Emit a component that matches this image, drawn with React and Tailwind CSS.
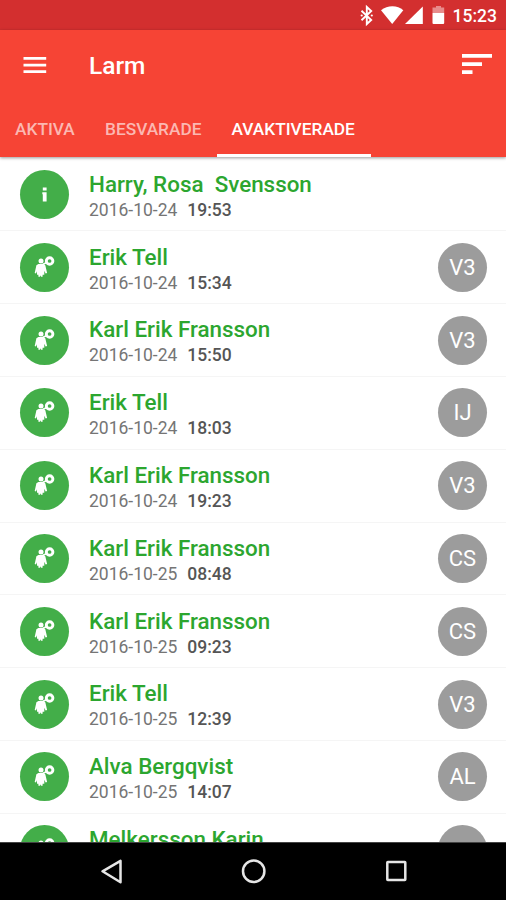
import React from 'react';

const alarms = [
  { name: 'Harry, Rosa  Svensson', date: '2016-10-24', time: '19:53', type: 'info' },
  { name: 'Erik Tell', date: '2016-10-24', time: '15:34', badge: 'V3' },
  { name: 'Karl Erik Fransson', date: '2016-10-24', time: '15:50', badge: 'V3' },
  { name: 'Erik Tell', date: '2016-10-24', time: '18:03', badge: 'IJ' },
  { name: 'Karl Erik Fransson', date: '2016-10-24', time: '19:23', badge: 'V3' },
  { name: 'Karl Erik Fransson', date: '2016-10-25', time: '08:48', badge: 'CS' },
  { name: 'Karl Erik Fransson', date: '2016-10-25', time: '09:23', badge: 'CS' },
  { name: 'Erik Tell', date: '2016-10-25', time: '12:39', badge: 'V3' },
  { name: 'Alva Bergqvist', date: '2016-10-25', time: '14:07', badge: 'AL' },
  { name: 'Melkersson Karin', badge: '' },
];

function StatusBar() {
  return (
    <div className="h-[30px] shrink-0 bg-[#d32f2f] flex items-center justify-end pr-[9px] text-white">
      <svg className="mr-[7px]" width="86" height="30" viewBox="0 0 86 30" fill="none">
        {/* bluetooth */}
        <path d="M1.5 10.7 L11.2 20 L6.8 24 V7 L11.2 11 L1.5 20.3" stroke="#fff" strokeWidth="1.9" />
        <circle cx="1.7" cy="15.5" r="1.1" fill="#fff" />
        <circle cx="11.8" cy="15.5" r="1.1" fill="#fff" />
        {/* wifi */}
        <path d="M21 10.3 C27.5 4.8 37.5 4.8 43.3 10.3 L32.2 24Z" fill="#fff" />
        {/* signal */}
        <path d="M62.8 6.5V24H45Z" fill="#fff" />
        {/* battery */}
        <path d="M76 6h5v1.6h3.2V13H72.5V7.6H76Z" fill="#e88b8b" />
        <path d="M72.5 13h11.7v10a1 1 0 0 1-1 1h-9.7a1 1 0 0 1-1-1Z" fill="#fff" />
      </svg>
      <span className="text-[17.5px] leading-[30px] pt-px font-medium">15:23</span>
    </div>
  );
}

function AppBar() {
  return (
    <header className="h-[127px] shrink-0 bg-[#f64435] shadow-[0_1px_3px_rgba(0,0,0,0.4)] relative z-10 flex flex-col">
      <div className="h-[71px] flex items-center pl-[23px] pr-[14px]">
        <svg className="mb-[2px]" width="24" height="18" viewBox="0 0 24 18" fill="#fff">
          <path d="M.5 1h22.7v2.7H.5zM.5 7.7h22.7v2.7H.5zM.5 14.3h22.7V17H.5z" />
        </svg>
        <h1 className="ml-[42px] text-[24.5px] font-medium text-white grow pt-px">Larm</h1>
        <svg className="mb-[3px]" width="30" height="20" viewBox="0 0 30 20" fill="#fff">
          <path d="M0 0h30v3.7H0zM0 8.3h20V12H0zM0 16.3h10.5V20H0z" />
        </svg>
      </div>
      <nav className="flex grow text-[17.3px] font-medium text-[#fbb8b2]">
        <div className="pl-[15px] pt-[16px] w-[90px] whitespace-nowrap">AKTIVA</div>
        <div className="pl-[15px] pt-[16px] w-[127px] whitespace-nowrap">BESVARADE</div>
        <div className="pl-[14.5px] pt-[16px] w-[154px] whitespace-nowrap text-white border-b-[3px] border-white">AVAKTIVERADE</div>
      </nav>
    </header>
  );
}

function AlarmIcon({ type }) {
  return (
    <div className="size-[49px] shrink-0 rounded-full bg-[#43ae49]">
      <svg width="49" height="49" viewBox="0 0 49 49" fill="#fff">
        {type === 'info' ? (
          <path d="M22.8 17.5h3.8v3h-3.8zM22.3 22.2h4.3v9.2h-3.8v-7.2h-.5z" />
        ) : (
          <>
            <circle cx="21" cy="17.9" r="2.5" />
            <path d="M18.4 20.9h5.2l1.7 1.4 1.8 7.6-1.5.6-1.3-2.7v3.9h-1.7v2.1h-1.7v-1h-.8v1h-1.7v-2.1h-1.4v-3.4l-1 2.2-1.3-.6 1.7-7.6Z" />
            <path d="M22.6 21.4l4.2-2" stroke="#fff" strokeWidth="1.7" />
            <circle cx="29.6" cy="18" r="3.3" fill="none" stroke="#fff" strokeWidth="2.9" />
          </>
        )}
      </svg>
    </div>
  );
}

function AlarmRow({ alarm }) {
  return (
    <li className="h-[72.8px] shrink-0 flex items-center pl-5 pr-[19px] border-b border-[#f5f5f5]">
      <AlarmIcon type={alarm.type} />
      <div className="ml-5 grow whitespace-pre pt-[4.6px]">
        <div className="text-[22.4px] leading-[26px] font-medium text-[#2ca62f]">{alarm.name}</div>
        <div className="h-[26px] text-[17.5px] leading-[26px] text-[#757575]">
          {alarm.date}
          <span className="ml-[10px] font-medium text-[#555]">{alarm.time}</span>
        </div>
      </div>
      {alarm.badge !== undefined && (
        <div className="size-[49px] rounded-full bg-[#9c9c9c] flex items-center justify-center text-[22px] text-white">
          {alarm.badge}
        </div>
      )}
    </li>
  );
}

function NavBar() {
  return (
    <footer className="h-[58px] shrink-0 bg-black border-t border-[#444] flex items-center">
      <svg width="506" height="57" viewBox="0 0 506 57" fill="none" stroke="#e6e6e6" strokeWidth="2.5">
        <path d="M120.5 17.8v21.5L102.5 28.3Z" strokeLinejoin="round" />
        <circle cx="253.7" cy="28.2" r="10.7" />
        <rect x="387.3" y="19" width="18" height="18" rx="0.5" />
      </svg>
    </footer>
  );
}

export default function App() {
  return (
    <div className="w-full h-[900px] flex flex-col overflow-hidden bg-white font-[Roboto,sans-serif]">
      <StatusBar />
      <AppBar />
      <ul className="grow min-h-0 overflow-hidden flex flex-col pt-[1.7px]">
        {alarms.map((alarm, i) => (
          <AlarmRow key={i} alarm={alarm} />
        ))}
      </ul>
      <NavBar />
    </div>
  );
}
